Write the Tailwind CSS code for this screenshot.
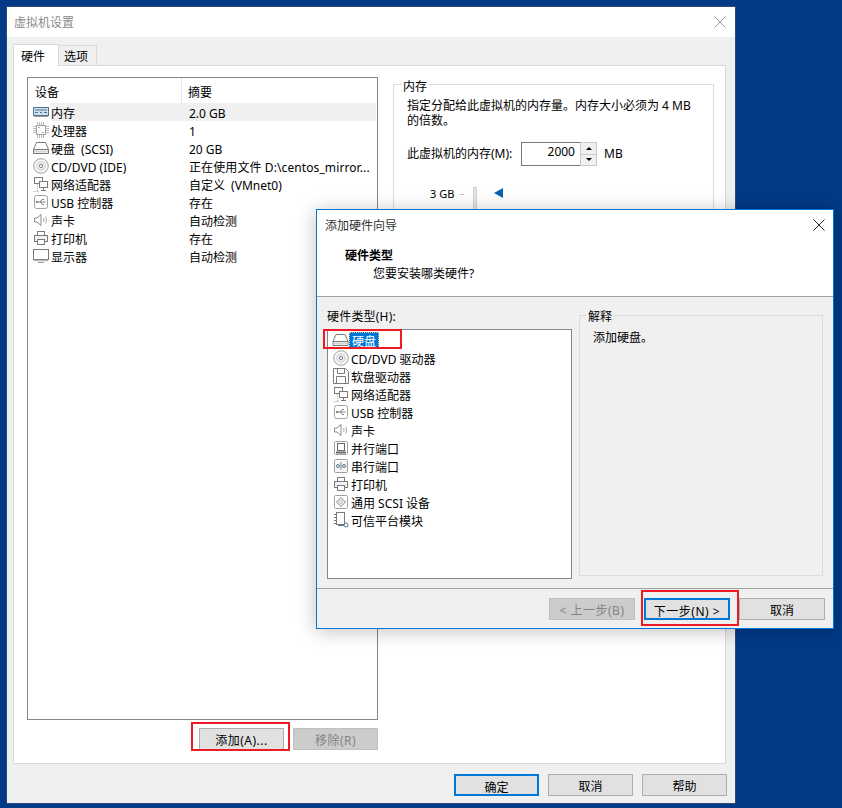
<!DOCTYPE html>
<html lang="zh-CN">
<head>
  <meta charset="UTF-8">
  <title>虚拟机设置</title>
  <script src="https://cdn.jsdelivr.net/npm/@tailwindcss/browser@4"></script>
</head>
<body class="bg-[#023a85] font-['Noto_Sans','Noto_Sans_CJK_SC',sans-serif] text-[12px] leading-[18px] text-black">

  <!-- icon sprites -->
  <svg class="hidden">
    <symbol id="i-mem" viewBox="0 0 16 16"><rect x=".5" y="3.5" width="15" height="8" fill="#cfe0ee" stroke="#4f7391"/><path d="M2 6h12M2 8.500h3m2 0h2m2 0h3" stroke="#4f7391"/><path d="M1 12.500h14" stroke="#9a9a9a"/></symbol>
    <symbol id="i-cpu" viewBox="0 0 16 16"><rect x="3.500" y="3.500" width="9" height="9" fill="#fff" stroke="#a0a0a0"/><path d="M0 4.500h3M0 6.500h3M0 8.500h3M0 10.500h3M13 4.500h3M13 6.500h3M13 8.500h3M13 10.500h3M4.500 0v3M6.500 0v3M8.500 0v3M10.500 0v3M4.500 13v3M6.500 13v3M8.500 13v3M10.500 13v3" stroke="#b8b8b8"/><path d="M5.500 5.500h1M9.500 10.500h1" stroke="#666"/></symbol>
    <symbol id="i-hdd" viewBox="0 0 16 16"><path d="M3.500 2.500h9l3 7v4H.5v-4z" fill="#fff" stroke="#7a7a7a"/><path d="M.5 9.500h15" stroke="#7a7a7a"/><path d="M1 11.500h14" stroke="#d2d2d2" stroke-width="2"/></symbol>
    <symbol id="i-cd" viewBox="0 0 16 16"><circle cx="8" cy="8" r="7.300" fill="#f7f7f7" stroke="#a0a0a0"/><circle cx="8" cy="8" r="4.200" fill="#ececec" stroke="#cfcfcf"/><circle cx="8" cy="8" r="1.600" fill="#fff" stroke="#808080"/></symbol>
    <symbol id="i-net" viewBox="0 0 16 16"><rect x="1.500" y="1.500" width="8" height="6" fill="#fff" stroke="#7a7a7a"/><rect x="6.500" y="5.500" width="8" height="6" fill="#fff" stroke="#7a7a7a"/><path d="M10.500 11.500v3M8 14.500h5" stroke="#7a7a7a"/><path d="M4.500 8v7M.5 15.500h6" stroke="#a8a8a8" stroke-dasharray="1 1"/></symbol>
    <symbol id="i-usb" viewBox="0 0 16 16"><rect x="1.500" y="1.500" width="13" height="13" rx="2" fill="#fff" stroke="#a0a0a0"/><path d="M3.500 8h9M7 8l2-2.500h2M7.500 8l2 2.500h1.500" fill="none" stroke="#808080"/><rect x="3" y="7" width="2" height="2" fill="#808080"/></symbol>
    <symbol id="i-snd" viewBox="0 0 16 16"><path d="M1.500 6v4h2.500l4 3.500v-11L4 6z" fill="#fff" stroke="#8a8a8a"/><path d="M10.500 6c.7 1.200.7 2.800 0 4M12.500 4.500c1.300 2.200 1.300 4.800 0 7" fill="none" stroke="#a8a8a8"/></symbol>
    <symbol id="i-prt" viewBox="0 0 16 16"><rect x="4.500" y="1.500" width="7" height="4" fill="#fff" stroke="#7a7a7a"/><rect x="1.500" y="5.500" width="13" height="6" fill="#f2f2f2" stroke="#7a7a7a"/><rect x="4.500" y="9.500" width="7" height="5" fill="#fff" stroke="#7a7a7a"/></symbol>
    <symbol id="i-mon" viewBox="0 0 16 16"><rect x=".5" y="1.500" width="15" height="10" fill="#fff" stroke="#7a7a7a"/><path d="M1 12.500h14" stroke="#b4b4b4" stroke-width="1.500"/><path d="M5 14.500h6" stroke="#9a9a9a"/></symbol>
    <symbol id="i-fdd" viewBox="0 0 16 16"><path d="M.5.500h12l3 3v12H.5z" fill="#fff" stroke="#7a7a7a"/><path d="M4.500.500v5h7v-5M3.500 15.500v-7h9v7" fill="none" stroke="#7a7a7a"/></symbol>
    <symbol id="i-par" viewBox="0 0 16 16"><rect x="1.500" y="1.500" width="13" height="13" rx="1" fill="#fff" stroke="#a0a0a0"/><rect x="4.500" y="3.500" width="7" height="7" fill="#fff" stroke="#666"/><path d="M3 12.500h10" stroke="#666" stroke-width="2"/></symbol>
    <symbol id="i-ser" viewBox="0 0 16 16"><rect x="1.500" y="1.500" width="13" height="13" rx="1" fill="#f7f7f7" stroke="#a0a0a0"/><circle cx="5" cy="8" r="1.500" fill="none" stroke="#4f7391"/><circle cx="11" cy="8" r="1.500" fill="none" stroke="#4f7391"/><path d="M8 4v8" stroke="#808080"/></symbol>
    <symbol id="i-scsi" viewBox="0 0 16 16"><rect x="1.500" y="1.500" width="13" height="13" rx="1" fill="#fff" stroke="#a0a0a0"/><path d="M8 3.500 12.500 8 8 12.500 3.500 8z" fill="#f7f7f7" stroke="#808080"/><circle cx="8" cy="8" r="1.500" fill="#fff" stroke="#bbb"/></symbol>
    <symbol id="i-tpm" viewBox="0 0 16 16"><rect x="3.500" y=".5" width="8" height="12" fill="#fff" stroke="#7a7a7a"/><path d="M1 2.500h2M1 5.500h2M1 8.500h2M1 11.500h2" stroke="#7a7a7a"/><circle cx="13" cy="13" r="2" fill="#fff" stroke="#4f7391"/><path d="M5 13.500h6" stroke="#4f7391"/></symbol>
  </svg>

  <div class="relative w-[842px] h-[808px] overflow-hidden">

    <!-- settings window -->
    <div class="absolute left-[6px] top-[6px] w-[730px] h-[798px] border border-[#2c4a78] bg-[#f0f0f0] flex flex-col">
      <div class="h-[30px] shrink-0 bg-white flex items-center justify-between pl-[7px] pr-[9px] text-[#8a8a8a]">
        <span class="pt-[2px]">虚拟机设置</span>
        <svg class="w-[12px] h-[12px]" viewBox="0 0 12 12"><path d="M.5.500l11 11M11.500.500l-11 11" stroke="#999" fill="none"/></svg>
      </div>

      <div class="flex items-end h-[28px] pl-[6px] shrink-0">
        <div class="relative z-10 -mb-px w-[46px] h-[22px] bg-white border border-b-0 border-[#d9d9d9] pl-[7px] pt-[2px] flex items-center">硬件</div>
        <div class="w-[38px] h-[20px] bg-[#f0f0f0] border border-l-0 border-b-0 border-[#d9d9d9] pl-[5px] pt-[3px] flex items-center">选项</div>
      </div>

      <div class="ml-[6px] w-[713px] h-[699px] shrink-0 bg-white border border-[#d9d9d9] flex pl-[13px] pt-[11px]">
        <div class="w-[351px] shrink-0">
          <div class="h-[643px] border border-[#828790] [&_span]:pt-[4px]">
            <div class="flex h-[25px] items-center">
              <div class="w-[154px] h-full pl-[7px] pt-[4px] flex items-center border-r border-[#e5e5e5]">设备</div>
              <div class="pl-[6px] pt-[4px]">摘要</div>
            </div>
            <div class="flex h-[18px] items-center"><svg class="w-[16px] h-[16px] ml-[5px] mr-[2px]"><use href="#i-mem"/></svg><div class="flex flex-1 h-[18px] items-center mr-[1px] bg-[#f0f0f0]"><span class="w-[138px]">内存</span><span>2.0 GB</span></div></div>
            <div class="flex h-[18px] items-center"><svg class="w-[16px] h-[16px] ml-[5px] mr-[2px]"><use href="#i-cpu"/></svg><span class="w-[138px]">处理器</span><span>1</span></div>
            <div class="flex h-[18px] items-center"><svg class="w-[16px] h-[16px] ml-[5px] mr-[2px]"><use href="#i-hdd"/></svg><span class="w-[138px] [word-spacing:3px]">硬盘 (SCSI)</span><span>20 GB</span></div>
            <div class="flex h-[18px] items-center"><svg class="w-[16px] h-[16px] ml-[5px] mr-[2px]"><use href="#i-cd"/></svg><span class="w-[138px]">CD/DVD (IDE)</span><span class="tracking-[0.1px]">正在使用文件 D:\centos_mirror...</span></div>
            <div class="flex h-[18px] items-center"><svg class="w-[16px] h-[16px] ml-[5px] mr-[2px]"><use href="#i-net"/></svg><span class="w-[138px]">网络适配器</span><span class="[word-spacing:3px]">自定义 (VMnet0)</span></div>
            <div class="flex h-[18px] items-center"><svg class="w-[16px] h-[16px] ml-[5px] mr-[2px]"><use href="#i-usb"/></svg><span class="w-[138px]">USB 控制器</span><span>存在</span></div>
            <div class="flex h-[18px] items-center"><svg class="w-[16px] h-[16px] ml-[5px] mr-[2px]"><use href="#i-snd"/></svg><span class="w-[138px]">声卡</span><span>自动检测</span></div>
            <div class="flex h-[18px] items-center"><svg class="w-[16px] h-[16px] ml-[5px] mr-[2px]"><use href="#i-prt"/></svg><span class="w-[138px]">打印机</span><span>存在</span></div>
            <div class="flex h-[18px] items-center"><svg class="w-[16px] h-[16px] ml-[5px] mr-[2px]"><use href="#i-mon"/></svg><span class="w-[138px]">显示器</span><span>自动检测</span></div>
          </div>
          <div class="flex justify-end gap-[9px] mt-[8px]">
            <button class="w-[85px] h-[22px] pt-[3px] tracking-[0.5px] bg-[#e1e1e1] border border-[#adadad]">添加(A)...</button>
            <button class="w-[85px] h-[22px] pt-[3px] tracking-[0.5px] bg-[#cccccc] border border-[#bfbfbf] text-[#838383]">移除(R)</button>
          </div>
        </div>

        <!-- memory group, the lower part sits behind the wizard -->
        <div class="relative ml-[15px] mt-[7px] w-[321px] h-[500px] border border-[#dcdcdc] pl-[13px] pt-[12px]">
          <span class="absolute left-[8px] -top-[7px] bg-white px-[1px]">内存</span>
          <p class="w-[290px] leading-[15px] pt-[1px]">指定分配给此虚拟机的内存量。内存大小必须为 4 MB 的倍数。</p>
          <div class="flex items-center mt-[14px]">
            <span class="w-[114px]">此虚拟机的内存(M):</span>
            <div class="flex w-[76px] h-[24px] border border-[#7a7a7a]">
              <div class="flex-1 pr-[5px] text-right leading-[18px]">2000</div>
              <div class="w-[17px] flex flex-col gap-[1px] p-[1px] bg-[#c9c9c9] -my-px -mr-px">
                <div class="flex-1 bg-[#f0f0f0] flex items-center justify-center"><div class="border-x-[3px] border-b-[3px] border-x-transparent border-b-black"></div></div>
                <div class="flex-1 bg-[#f0f0f0] flex items-center justify-center"><div class="border-x-[3px] border-t-[3px] border-x-transparent border-t-black"></div></div>
              </div>
            </div>
            <span class="ml-[7px]">MB</span>
          </div>
          <div class="flex items-start mt-[21px] ml-[23px]">
            <span class="text-[11px] leading-[14px] w-[30px]">3 GB</span>
            <div class="w-[4px] h-px bg-[#c0c0c0] mt-[7px]"></div>
            <div class="ml-[9px] w-[4px] h-[100px] bg-[#e6e6e6] border border-[#d0d0d0]"></div>
            <div class="ml-[17px] mt-[1px] border-y-[5px] border-r-[9px] border-y-transparent border-r-[#0a64ad]"></div>
          </div>
        </div>
      </div>

      <div class="flex justify-end gap-[9px] mt-[10px] pr-[8px]">
        <button class="w-[85px] h-[22px] pt-[3px] bg-[#e1e1e1] border-2 border-[#0078d7]">确定</button>
        <button class="w-[85px] h-[22px] pt-[3px] bg-[#e1e1e1] border border-[#adadad]">取消</button>
        <button class="w-[85px] h-[22px] pt-[3px] bg-[#e1e1e1] border border-[#adadad]">帮助</button>
      </div>
    </div>

    <!-- add hardware wizard -->
    <div class="absolute left-[316px] top-[209px] w-[518px] h-[420px] border border-[#0078d7] bg-[#f0f0f0] shadow-[0_2px_18px_rgba(0,0,0,0.25)] flex flex-col">
      <div class="h-[87px] shrink-0 bg-white border-b border-[#a0a0a0]">
        <div class="h-[30px] flex items-center justify-between pl-[8px] pr-[8px]">
          <span class="pt-[2px] text-[#333]">添加硬件向导</span>
          <svg class="w-[12px] h-[12px]" viewBox="0 0 12 12"><path d="M.5.500l11 11M11.500.500l-11 11" stroke="#222" fill="none"/></svg>
        </div>
        <div class="pl-[28px] pt-[7px] font-bold">硬件类型</div>
        <div class="pl-[56px]">您要安装哪类硬件?</div>
      </div>

      <div class="flex flex-1 pl-[10px] pt-[11px]">
        <div class="w-[245px]">
          <div class="h-[21px] leading-[18px] tracking-[0.2px]">硬件类型(H):</div>
          <div class="h-[250px] bg-white border border-[#828790] pt-[1px] [&_span]:pt-[4px]">
            <div class="flex h-[18px] items-center"><svg class="w-[17px] h-[16px] ml-[4px]"><use href="#i-hdd"/></svg><div class="flex items-center h-[16px] px-[3px] bg-[#0078d7] text-white outline-1 -outline-offset-1 outline-dotted outline-[#f5c27a]"><span>硬盘</span></div></div>
            <div class="flex h-[18px] items-center"><svg class="w-[16px] h-[16px] ml-[5px] mr-[2px]"><use href="#i-cd"/></svg><span>CD/DVD 驱动器</span></div>
            <div class="flex h-[18px] items-center"><svg class="w-[16px] h-[16px] ml-[5px] mr-[2px]"><use href="#i-fdd"/></svg><span>软盘驱动器</span></div>
            <div class="flex h-[18px] items-center"><svg class="w-[16px] h-[16px] ml-[5px] mr-[2px]"><use href="#i-net"/></svg><span>网络适配器</span></div>
            <div class="flex h-[18px] items-center"><svg class="w-[16px] h-[16px] ml-[5px] mr-[2px]"><use href="#i-usb"/></svg><span>USB 控制器</span></div>
            <div class="flex h-[18px] items-center"><svg class="w-[16px] h-[16px] ml-[5px] mr-[2px]"><use href="#i-snd"/></svg><span>声卡</span></div>
            <div class="flex h-[18px] items-center"><svg class="w-[16px] h-[16px] ml-[5px] mr-[2px]"><use href="#i-par"/></svg><span>并行端口</span></div>
            <div class="flex h-[18px] items-center"><svg class="w-[16px] h-[16px] ml-[5px] mr-[2px]"><use href="#i-ser"/></svg><span>串行端口</span></div>
            <div class="flex h-[18px] items-center"><svg class="w-[16px] h-[16px] ml-[5px] mr-[2px]"><use href="#i-prt"/></svg><span>打印机</span></div>
            <div class="flex h-[18px] items-center"><svg class="w-[16px] h-[16px] ml-[5px] mr-[2px]"><use href="#i-scsi"/></svg><span>通用 SCSI 设备</span></div>
            <div class="flex h-[18px] items-center"><svg class="w-[16px] h-[16px] ml-[5px] mr-[2px]"><use href="#i-tpm"/></svg><span>可信平台模块</span></div>
          </div>
        </div>
        <div class="relative ml-[7px] mt-[7px] w-[244px] h-[261px] border border-[#dcdcdc] pl-[13px] pt-[13px]">
          <span class="absolute left-[6px] -top-[6px] bg-[#f0f0f0] px-[2px] leading-[14px]">解释</span>
          添加硬盘。
        </div>
      </div>

      <div class="h-[40px] shrink-0 border-t border-[#a0a0a0] flex justify-end gap-[9px] pt-[9px] pr-[8px]">
        <button class="w-[86px] h-[22px] pt-[3px] tracking-[0.5px] bg-[#cccccc] border border-[#bfbfbf] text-[#838383]">&lt; 上一步(B)</button>
        <button class="w-[86px] h-[22px] pt-[3px] tracking-[0.5px] bg-[#e1e1e1] border-2 border-[#0078d7]">下一步(N) &gt;</button>
        <button class="w-[86px] h-[22px] pt-[3px] bg-[#e1e1e1] border border-[#adadad]">取消</button>
      </div>
    </div>

    <!-- red annotations -->
    <div class="absolute left-[191px] top-[722px] w-[99px] h-[29px] border-2 border-[#ed1c24]"></div>
    <div class="absolute left-[323px] top-[329px] w-[79px] h-[20px] border-2 border-[#ed1c24]"></div>
    <div class="absolute left-[641px] top-[590px] w-[98px] h-[36px] border-2 border-[#ed1c24]"></div>
  </div>
</body>
</html>
